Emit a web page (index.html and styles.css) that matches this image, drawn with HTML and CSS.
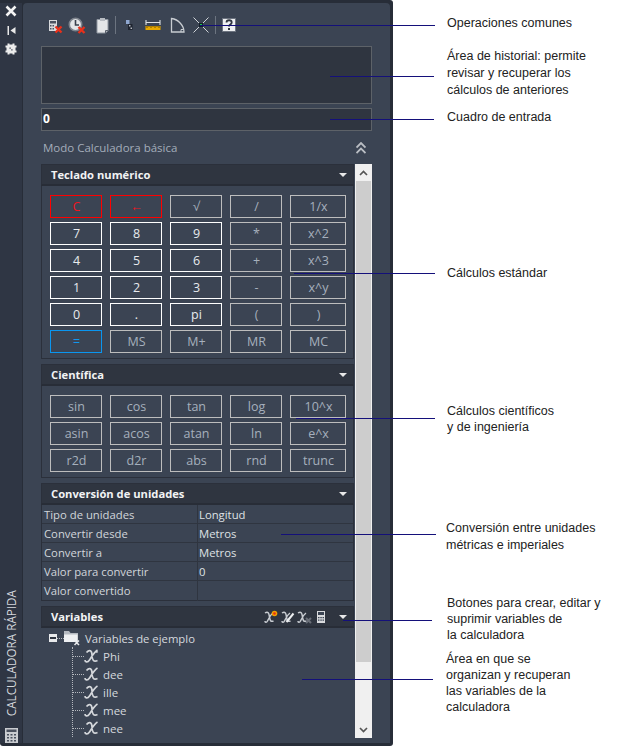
FILE: index.html
```html
<!DOCTYPE html>
<html lang="es">
<head>
<meta charset="utf-8">
<title>Calculadora rápida</title>
<link rel="stylesheet" href="styles.css">
</head>
<body>
<div class="page">
  <div class="panel">
    <aside class="strip">
      <svg class="strip-icon" width="14" height="14" viewBox="0 0 14 14"><path d="M2.500 2.500l9 9M11.500 2.500l-9 9" stroke="#f4f4f4" stroke-width="2.600" fill="none"/></svg>
      <svg class="strip-icon" width="14" height="14" viewBox="0 0 14 14"><path d="M3.500 3h1.500v9H3.500z" fill="#e8e8e8"/><path d="M6.500 7.500l5-3.500v7z" fill="#e8e8e8"/></svg>
      <svg class="strip-icon" width="14" height="14" viewBox="0 0 14 14"><path d="M3.500 1.500h2v1h3v-1h2v2h2v2h-1v3h1v2h-2v2h-2v-1h-3v1h-2v-2h-2v-2h1v-3h-1v-2h2z" fill="#ececec"/><path d="M5.500 5.500h1.200v1.200H5.500zM7.300 7.300h1.200v1.200H7.300z" fill="#2f3644"/></svg>
      <div class="strip-title">CALCULADORA RÁPIDA</div>
      <svg class="strip-calc" width="13" height="15" viewBox="0 0 13 15"><path d="M0 0h13v15H0z" fill="#c9ccd0"/><path d="M1.500 1.500h10v2.500h-10z" fill="#4a515e"/><path d="M2 6h2v1.500H2zM5.500 6h2v1.500h-2zM9 6h2v1.500H9zM2 9h2v1.500H2zM5.500 9h2v1.500h-2zM9 9h2v1.500H9zM2 12h2v1.500H2zM5.500 12h2v1.500h-2zM9 12h2v1.500H9z" fill="#4a515e"/></svg>
    </aside>
    <main class="main">
      <div class="toolbar">
        <svg class="t1" width="15" height="18" viewBox="0 0 15 18"><path d="M1 4h8v11H1z" fill="#d8dadd"/><path d="M2 5h6v2.500H2z" fill="#4b5260"/><path d="M2 9h1.500v1.500H2zM4.500 9H6v1.500H4.500zM2 12h1.500v1.500H2zM4.500 12H6v1.500H4.500z" fill="#4b5260"/><path d="M7.500 10.500l6 6M13.500 10.500l-6 6" stroke="#e8301a" stroke-width="2.400"/></svg>
        <svg class="t2" width="18" height="18" viewBox="0 0 18 18"><circle cx="7.500" cy="8.500" r="6.200" fill="#e4e6e8" stroke="#7d838c" stroke-width="1.600"/><path d="M7.500 4v5h3.500" stroke="#39404c" stroke-width="1.600" fill="none"/><path d="M10.500 11l6 6M16.500 11l-6 6" stroke="#e8301a" stroke-width="2.400"/></svg>
        <svg class="t3" width="13" height="18" viewBox="0 0 13 18"><path d="M1 3.500h11v11l-2.500 2.500H1z" fill="#e4e6e8" stroke="#9097a1"/><path d="M4 2h5v3H4z" fill="#b8bcc2"/><path d="M9.500 17v-2.500H12" fill="none" stroke="#59606c"/></svg>
        <span class="tsep s1"></span>
        <svg class="t4" width="7" height="18" viewBox="0 0 7 18"><path d="M0 4h3.500v4H0z" fill="#8fa7d0"/><path d="M2 8h4.500v6H2z" fill="#1f2430"/><path d="M3 9h1.500v1.500H3zM4.500 11.500H6V13H4.500z" fill="#b5bac1"/></svg>
        <svg class="t5" width="16" height="18" viewBox="0 0 16 18"><path d="M1 4v5M15 4v5M1 6.500h14" stroke="#dfe2e5" stroke-width="1.100" fill="none"/><path d="M.5 10h15v4H.5z" fill="#e8a800"/><path d="M2 10v2M4 10v1M6 10v2M8 10v1M10 10v2M12 10v1M14 10v2" stroke="#5a4300" stroke-width=".8"/></svg>
        <svg class="t6" width="15" height="18" viewBox="0 0 15 18"><path d="M1.500 2.500V16H14C14 9.500 8.500 3.500 1.500 2.500z" fill="none" stroke="#c8ccd1" stroke-width="1.300"/><path d="M11 16v-2.500h2.500" fill="none" stroke="#c8ccd1"/></svg>
        <svg class="t7" width="16" height="18" viewBox="0 0 16 18"><path d="M.5 1.500l15 15M15.500 1.500l-15 15" stroke="#e0e3e6" stroke-width=".9"/><rect x="6" y="7" width="4" height="4" fill="#16202a"/><rect x="7" y="8" width="2" height="2" fill="#19c850"/></svg>
        <span class="tsep s2"></span>
        <svg class="t8" width="14" height="18" viewBox="0 0 14 18"><path d="M.5 2.500h13v13H.5z" fill="#eef0f2" stroke="#6d7480"/><path d="M4.500 6.500c0-3 5.200-3 5.200 0 0 2-2.700 2-2.700 4" fill="none" stroke="#2f3540" stroke-width="1.800"/><path d="M6 12h2v2H6z" fill="#2f3540"/></svg>
      </div>
      <div class="history"></div>
      <div class="input">0</div>
      <div class="mode">
        <span>Modo Calculadora básica</span>
        <svg width="10" height="12" viewBox="0 0 10 12"><path d="M.5 5.500L5 1l4.500 4.500M.5 11L5 6.500 9.500 11" fill="none" stroke="#b9bdc3" stroke-width="1.800"/></svg>
      </div>
      <div class="scroller">
        <div class="sections">
          <section class="section">
            <header class="section-head"><h2>Teclado numérico</h2><i class="caret"></i></header>
            <div class="keys">
              <span class="key red">C</span><span class="key red">←</span><span class="key">√</span><span class="key">/</span><span class="key">1/x</span>
              <span class="key num">7</span><span class="key num">8</span><span class="key num">9</span><span class="key">*</span><span class="key">x^2</span>
              <span class="key num">4</span><span class="key num">5</span><span class="key num">6</span><span class="key">+</span><span class="key">x^3</span>
              <span class="key num">1</span><span class="key num">2</span><span class="key num">3</span><span class="key">-</span><span class="key">x^y</span>
              <span class="key num">0</span><span class="key num">.</span><span class="key num">pi</span><span class="key">(</span><span class="key">)</span>
              <span class="key blue">=</span><span class="key">MS</span><span class="key">M+</span><span class="key">MR</span><span class="key">MC</span>
            </div>
          </section>
          <section class="section">
            <header class="section-head"><h2>Científica</h2><i class="caret"></i></header>
            <div class="keys">
              <span class="key">sin</span><span class="key">cos</span><span class="key">tan</span><span class="key">log</span><span class="key">10^x</span>
              <span class="key">asin</span><span class="key">acos</span><span class="key">atan</span><span class="key">ln</span><span class="key">e^x</span>
              <span class="key">r2d</span><span class="key">d2r</span><span class="key">abs</span><span class="key">rnd</span><span class="key">trunc</span>
            </div>
          </section>
          <section class="section">
            <header class="section-head"><h2>Conversión de unidades</h2><i class="caret"></i></header>
            <div class="props">
              <div class="prop"><span>Tipo de unidades</span><span>Longitud</span></div>
              <div class="prop"><span>Convertir desde</span><span>Metros</span></div>
              <div class="prop"><span>Convertir a</span><span>Metros</span></div>
              <div class="prop"><span>Valor para convertir</span><span>0</span></div>
              <div class="prop"><span>Valor convertido</span><span></span></div>
            </div>
          </section>
          <section class="section vars">
            <header class="section-head">
              <h2>Variables</h2>
              <svg class="v1" width="14" height="14" viewBox="0 0 14 14"><path d="M1 3c3-2 4 0 4.500 4S7 12 9.500 11M9 3C6 5 4.500 9 3.500 11S1 12.500 1 11" fill="none" stroke="#c8ccd1" stroke-width="1.500"/><circle cx="10.500" cy="3.500" r="2.800" fill="#f0a000"/><circle cx="10.500" cy="3.500" r="1.300" fill="#e83018"/></svg>
              <svg class="v2" width="14" height="14" viewBox="0 0 14 14"><path d="M1 3c3-2 4 0 4.500 4S7 12 9.500 11M9 3C6 5 4.500 9 3.500 11S1 12.500 1 11" fill="none" stroke="#c8ccd1" stroke-width="1.500"/><path d="M12.500 3.500L5.500 12" stroke="#eceef0" stroke-width="2"/></svg>
              <svg class="v3" width="15" height="14" viewBox="0 0 15 14"><path d="M1 3c3-2 4 0 4.500 4S7 12 9.500 11M9 3C6 5 4.500 9 3.500 11S1 12.500 1 11" fill="none" stroke="#c8ccd1" stroke-width="1.500"/><path d="M9 8l5 5M14 8l-5 5" stroke="#6a6f78" stroke-width="2"/></svg>
              <svg class="v4" width="8" height="12" viewBox="0 0 8 12"><path d="M0 0h8v12H0z" fill="#d8dadd"/><path d="M1 1h6v3H1z" fill="#3b4453"/><path d="M1 6h1.500v1.200H1zM3.300 6h1.500v1.200H3.300zM5.500 6H7v1.200H5.500zM1 8.500h1.500v1.200H1zM3.300 8.500h1.500v1.200H3.300zM5.500 8.500H7v1.200H5.500z" fill="#3b4453"/></svg>
              <i class="caret v5"></i>
            </header>
            <div class="tree">
              <div class="root">
                <span class="minus"></span>
                <span class="root-link"></span>
                <svg width="16" height="16" viewBox="0 0 16 16"><path d="M0 1h5l1.500 2H14v9H0z" fill="#b4b9c0"/><path d="M0 4.500h13.500V12H0z" fill="#eef0f2"/><path d="M10.500 10.500l4.500 4.500M15 10.500L10.500 15" stroke="#e8eaec" stroke-width="1.500"/></svg>
                <span class="root-name">Variables de ejemplo</span>
              </div>
              <div class="leaves">
                <div class="leaf"><span class="leaf-link"></span><svg width="15" height="14" viewBox="0 0 15 14"><path d="M2.500 3.500c3-3.500 5.500-2 5.500 2.500s1.500 7.500 5.500 5.500M13.500 1C10 3 7.500 8 5.500 11s-4.500 2-4.500 0M9.500 5c1.500-2.500 3-3 4-1.500" fill="none" stroke="#d4d7db" stroke-width="1.700"/></svg><span>Phi</span></div>
                <div class="leaf"><span class="leaf-link"></span><svg width="15" height="14" viewBox="0 0 15 14"><path d="M2.500 3.500c3-3.500 5.500-2 5.500 2.500s1.500 7.500 5.500 5.500M13.500 1C10 3 7.500 8 5.500 11s-4.500 2-4.500 0" fill="none" stroke="#d4d7db" stroke-width="1.700"/></svg><span>dee</span></div>
                <div class="leaf"><span class="leaf-link"></span><svg width="15" height="14" viewBox="0 0 15 14"><path d="M2.500 3.500c3-3.500 5.500-2 5.500 2.500s1.500 7.500 5.500 5.500M13.500 1C10 3 7.500 8 5.500 11s-4.500 2-4.500 0" fill="none" stroke="#d4d7db" stroke-width="1.700"/></svg><span>ille</span></div>
                <div class="leaf"><span class="leaf-link"></span><svg width="15" height="14" viewBox="0 0 15 14"><path d="M2.500 3.500c3-3.500 5.500-2 5.500 2.500s1.500 7.500 5.500 5.500M13.500 1C10 3 7.500 8 5.500 11s-4.500 2-4.500 0" fill="none" stroke="#d4d7db" stroke-width="1.700"/></svg><span>mee</span></div>
                <div class="leaf"><span class="leaf-link"></span><svg width="15" height="14" viewBox="0 0 15 14"><path d="M2.500 3.500c3-3.500 5.500-2 5.500 2.500s1.500 7.500 5.500 5.500M13.500 1C10 3 7.500 8 5.500 11s-4.500 2-4.500 0" fill="none" stroke="#d4d7db" stroke-width="1.700"/></svg><span>nee</span></div>
              </div>
            </div>
          </section>
        </div>
        <div class="scrollbar">
          <div class="sb-btn"><svg width="9" height="6" viewBox="0 0 9 6"><path d="M1 5l3.500-3.500L8 5" fill="none" stroke="#555" stroke-width="1.700"/></svg></div>
          <div class="sb-thumb"></div>
          <div class="sb-track"></div>
          <div class="sb-btn"><svg width="9" height="6" viewBox="0 0 9 6"><path d="M1 1l3.500 3.500L8 1" fill="none" stroke="#555" stroke-width="1.700"/></svg></div>
        </div>
      </div>
    </main>
  </div>

  <i class="leader l1"></i><i class="leader l2"></i><i class="leader l3"></i><i class="leader l4"></i>
  <i class="leader l5"></i><i class="leader l6"></i><i class="leader l7"></i><i class="leader l8"></i>

  <p class="note n1">Operaciones comunes</p>
  <p class="note n2">Área de historial: permite<br>revisar y recuperar los<br>cálculos de anteriores</p>
  <p class="note n3">Cuadro de entrada</p>
  <p class="note n4">Cálculos estándar</p>
  <p class="note n5">Cálculos científicos<br>y de ingeniería</p>
  <p class="note n6">Conversión entre unidades<br>métricas e imperiales</p>
  <p class="note n7">Botones para crear, editar y<br>suprimir variables de<br>la calculadora</p>
  <p class="note n8">Área en que se<br>organizan y recuperan<br>las variables de la<br>calculadora</p>
</div>
</body>
</html>
```
FILE: styles.css
```css
* { box-sizing: border-box; }
html, body { margin: 0; padding: 0; background: #fff; }
body { font-family: "Open Sans", "Noto Sans", sans-serif; }
.page { position: relative; width: 617px; height: 754px; overflow: hidden; }

.panel {
  display: flex;
  width: 393px;
  height: 746px;
  background: #272d38;
  padding: 3px 3px 3px 0;
  border-radius: 0 3px 3px 3px;
}

.strip {
  width: 23px;
  display: flex;
  flex-direction: column;
  align-items: center;
  padding-top: 1px;
  background: #2f3644;
  border-right: 1px solid #272d38;
}
.strip-icon { margin: 0 0 5px; display: block; }
.strip-title {
  margin-top: auto;
  writing-mode: vertical-rl;
  transform: rotate(180deg);
  font-size: 11.700px;
  line-height: 14px;
  color: #d5d8dd;
  white-space: nowrap;
}
.strip-calc { margin-top: 12px; display: block; }

.main {
  flex: 1;
  min-width: 0;
  background: #3b4453;
  border-radius: 4px 4px 0 0;
  padding: 0 18px 0 18px;
  overflow: hidden;
}

.toolbar { display: flex; align-items: flex-start; height: 31px; padding: 13px 0 0 7px; }
.toolbar svg { display: block; flex: none; }
.t2 { margin-left: 5px; }
.t3 { margin-left: 10px; }
.tsep { flex: none; width: 1px; height: 18px; background: #6c7480; }
.s1 { margin-left: 6px; }
.t4 { margin-left: 10px; }
.t5 { margin-left: 12px; }
.t6 { margin-left: 9px; }
.t7 { margin-left: 8px; }
.s2 { margin-left: 6px; }
.t8 { margin-left: 6px; }

.history {
  height: 58px;
  margin-top: 12px;
  background: #2f3540;
  border: 1px solid #5d6268;
}
.input {
  height: 23px;
  margin-top: 4px;
  padding-left: 1px;
  background: #2f3540;
  border: 1px solid #5d6268;
  color: #fff;
  font-weight: 700;
  font-size: 12px;
  line-height: 20px;
}
.mode {
  height: 33px;
  display: flex;
  align-items: center;
  justify-content: space-between;
  padding: 0 6px 0 2px;
  color: #a3adba;
  font-size: 11.500px;
}

.scroller { display: flex; gap: 1px; align-items: flex-start; height: 574px; }
.sections { width: 313px; flex: none; }
.section { margin-bottom: 5px; }
.section-head {
  height: 22px;
  display: flex;
  align-items: center;
  padding: 0 6px 0 9px;
  background: #2f3540;
  border: 1px solid #2b303b;
  border-bottom: 2px solid #282d37;
}
.section-head h2 {
  margin: 0 auto 0 0;
  font-size: 11.200px;
  font-weight: 700;
  color: #f2f3f4;
}
.caret {
  width: 0;
  height: 0;
  flex: none;
  border-left: 4px solid transparent;
  border-right: 4px solid transparent;
  border-top: 4px solid #e8e8e8;
}

.keys {
  display: grid;
  grid-template-columns: 52px 52px 52px 52px 56px;
  grid-auto-rows: 23px;
  gap: 4px 8px;
  padding: 9px 0 5px 8px;
  border: 1px solid #2b303b;
  border-top: 0;
}
.key {
  display: flex;
  align-items: center;
  justify-content: center;
  padding: 1px 0 0 1px;
  border: 1px solid #bdbdbd;
  color: #a6b0bd;
  font-size: 12.500px;
  line-height: 1;
}
.key.num { border-color: #fff; color: #e8ebee; }
.key.red { border-color: #f00; color: #f0141e; }
.key.blue { border-color: #0a96f0; color: #1296ec; }

.props { border: 1px solid #2b303b; border-top: 0; }
.prop {
  height: 19px;
  display: grid;
  grid-template-columns: 155px 1fr;
  border-bottom: 1px solid #2f3540;
  font-size: 11.300px;
  line-height: 20px;
  color: #d2d6db;
}
.prop:last-child { border-bottom: 0; }
.prop span { padding-left: 2px; white-space: nowrap; }
.prop span + span { border-left: 1px solid #2f3540; padding-left: 1px; color: #dfe2e5; }

.vars { margin-bottom: 0; }
.v1 { margin-right: 3px; }
.v2 { margin-right: 2px; }
.v3 { margin-right: 5px; }
.v4 { margin-right: 14px; }
.section-head svg { display: block; flex: none; }

.tree { height: 110px; overflow: hidden; padding: 1px 0 0 8px; }
.root { height: 18px; display: flex; align-items: center; }
.minus {
  position: relative;
  width: 8px;
  height: 8px;
  flex: none;
  background: #e8eaec;
}
.minus::after {
  content: "";
  position: absolute;
  left: 1px;
  right: 1px;
  top: 3px;
  height: 2px;
  background: #2f3540;
}
.root-link { width: 7px; flex: none; border-top: 1px dotted #b5b9bf; }
.root svg { display: block; flex: none; margin-right: -1px; }
.root-name { margin-left: 6px; font-size: 11.300px; color: #d5d9de; white-space: nowrap; }

.leaves { margin-left: 23px; border-left: 1px dotted #b5b9bf; }
.leaf {
  height: 18px;
  display: flex;
  align-items: center;
  font-size: 11.500px;
  color: #d5d9de;
}
.leaf svg { display: block; flex: none; margin: 0 4px 0 0; }
.leaf-link { width: 11px; flex: none; border-top: 1px dotted #b5b9bf; }

.scrollbar { width: 17px; height: 574px; flex: none; display: flex; flex-direction: column; background: #f0f0f0; }
.sb-btn { height: 17px; flex: none; display: flex; align-items: center; justify-content: center; }
.sb-thumb { height: 481px; flex: none; margin: 0 1px; background: #cdcdcd; }
.sb-track { flex: 1; }

.leader { position: absolute; display: block; height: 1px; background: #14107a; }
.l1 { left: 200px; width: 235px; top: 25px; }
.l2 { left: 330px; width: 104px; top: 76px; }
.l3 { left: 330px; width: 104px; top: 119px; }
.l4 { left: 294px; width: 141px; top: 273px; }
.l5 { left: 296px; width: 139px; top: 418px; }
.l6 { left: 281px; width: 155px; top: 534px; }
.l7 { left: 343px; width: 89px; top: 620px; }
.l8 { left: 302px; width: 131px; top: 679px; }

.note {
  position: absolute;
  margin: 0;
  font-family: "Liberation Sans", Arial, sans-serif;
  font-size: 12.500px;
  line-height: 17px;
  color: #222;
  white-space: nowrap;
}
.n1 { left: 447px; top: 15px; }
.n2 { left: 447px; top: 48px; }
.n3 { left: 447px; top: 109px; }
.n4 { left: 447px; top: 265px; }
.n5 { left: 447px; top: 403px; line-height: 16px; }
.n6 { left: 446px; top: 520px; }
.n7 { left: 447px; top: 595px; line-height: 16px; }
.n8 { left: 446px; top: 651px; line-height: 16px; }
```
